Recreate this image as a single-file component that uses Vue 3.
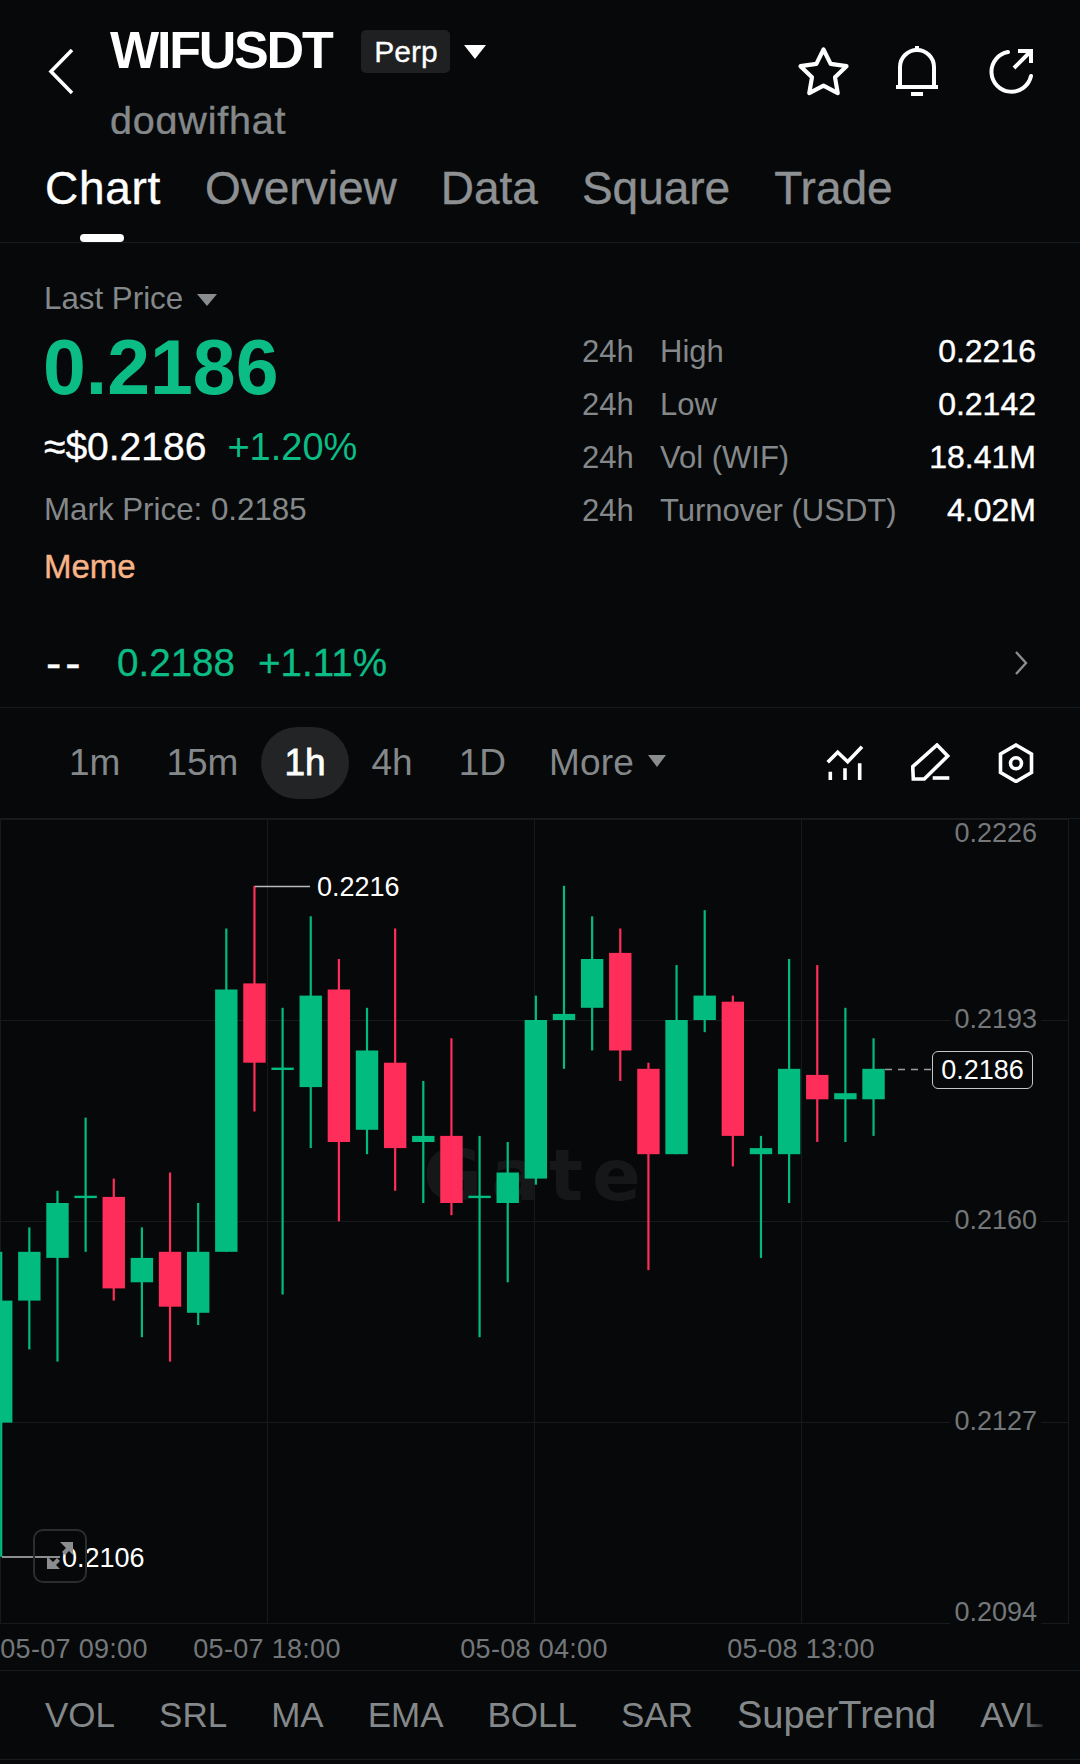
<script setup>
import { computed } from 'vue'

const tabs = ['Chart', 'Overview', 'Data', 'Square', 'Trade']
const intervals = ['1m', '15m', '1h', '4h', '1D']
const indicators = ['VOL', 'SRL', 'MA', 'EMA', 'BOLL', 'SAR', 'SuperTrend', 'AVL']

const stats = [
  { name: 'High', value: '0.2216' },
  { name: 'Low', value: '0.2142' },
  { name: 'Vol (WIF)', value: '18.41M' },
  { name: 'Turnover (USDT)', value: '4.02M' },
]

// chart scale, prices in 1/10000
const CHART_TOP = 819
const UNIT = 6.1
const priceY = (p) => 1020 + (2194 - p) * UNIT - CHART_TOP

// high, top of body, bottom of body, low, up or down
const rows = [
  [2156, 2148, 2128, 2106, 1],
  [2160, 2156, 2148, 2140, 1],
  [2166, 2164, 2155, 2138, 1],
  [2178, 2165, 2165, 2156, 1],
  [2168, 2165, 2150, 2148, 0],
  [2160, 2155, 2151, 2142, 1],
  [2169, 2156, 2147, 2138, 0],
  [2164, 2156, 2146, 2144, 1],
  [2209, 2199, 2156, 2156, 1],
  [2216, 2200, 2187, 2179, 0],
  [2196, 2186, 2186, 2149, 1],
  [2211, 2198, 2183, 2173, 1],
  [2204, 2199, 2174, 2161, 0],
  [2196, 2189, 2176, 2172, 1],
  [2209, 2187, 2173, 2166, 0],
  [2184, 2175, 2174, 2164, 1],
  [2191, 2175, 2164, 2162, 0],
  [2175, 2165, 2165, 2142, 1],
  [2174, 2169, 2164, 2151, 1],
  [2198, 2194, 2168, 2167, 1],
  [2216, 2195, 2194, 2186, 1],
  [2211, 2204, 2196, 2189, 1],
  [2209, 2205, 2189, 2184, 0],
  [2187, 2186, 2172, 2153, 0],
  [2203, 2194, 2172, 2172, 1],
  [2212, 2198, 2194, 2192, 1],
  [2198, 2197, 2175, 2170, 0],
  [2175, 2173, 2172, 2155, 1],
  [2204, 2186, 2172, 2164, 1],
  [2203, 2185, 2181, 2174, 0],
  [2196, 2182, 2181, 2174, 1],
  [2191, 2186, 2181, 2175, 1],
]

const candles = computed(() => rows.map((r, i) => {
  const top = priceY(r[1])
  const h = priceY(r[2]) - top
  return {
    x: 1.2 + i * 28.14,
    hi: priceY(r[0]),
    lo: priceY(r[3]),
    top: h === 0 ? top - 1.2 : top,
    h: h === 0 ? 2.4 : h,
    color: r[4] ? '#02bb7f' : '#ff2d5a',
  }
}))

const gridX = [0.5, 267.5, 534.5, 801.5, 1068.5]
const gridY = [0.5, 201.5, 402.5, 603.5, 804.5]

const axis = [
  { label: '0.2226', top: 1 },
  { label: '0.2193', top: 187 },
  { label: '0.2160', top: 388 },
  { label: '0.2127', top: 589 },
  { label: '0.2094', top: 780 },
]

const dates = [
  { label: '05-07 09:00', left: 74 },
  { label: '05-07 18:00', left: 267 },
  { label: '05-08 04:00', left: 534 },
  { label: '05-08 13:00', left: 801 },
]
</script>

<template>
  <div class="page">
    <div class="head">
      <svg class="back" width="30" height="50" viewBox="0 0 30 50" fill="none" stroke="#fff" stroke-width="3.6">
        <path d="M25 3 L4 24.500 L25 46" />
      </svg>
      <div class="names">
        <div class="title-row">
          <span class="title">WIFUSDT</span>
          <span class="badge">Perp</span>
          <span class="caret"></span>
        </div>
        <div class="sub">dogwifhat</div>
      </div>
      <div class="actions">
        <svg class="star" width="57" height="57" viewBox="0 0 52 52" fill="none" stroke="#fff" stroke-width="3.800" stroke-linejoin="round">
          <polygon points="26,5 32.500,18.100 47,20.200 36.500,30.400 39,44.800 26,38 13,44.800 15.500,30.400 5,20.200 19.500,18.100" />
        </svg>
        <svg width="44" height="52" viewBox="0 0 44 52" fill="none" stroke="#fff" stroke-width="4">
          <path d="M4 41 V21 A17 17 0 0 1 38 21 V41" />
          <path d="M0 41 H42 M15 48 H27" />
          <path d="M21 0 V5" />
        </svg>
        <svg width="50" height="50" viewBox="0 0 50 50" fill="none" stroke="#fff" stroke-width="4">
          <path d="M22 6 A20 20 0 1 0 45 30" stroke-linecap="round" />
          <path d="M28 22 L45 5 M32 5 H45 V17" />
        </svg>
      </div>
    </div>

    <div class="tabs">
      <span v-for="(t, i) in tabs" :key="t" class="tab" :class="{ active: i === 0 }">{{ t }}</span>
    </div>

    <div class="info">
      <div class="info-left">
        <div class="last">Last Price<span class="caret small"></span></div>
        <div class="price">0.2186</div>
        <div class="fiat"><span class="med">≈$0.2186</span><span class="up">+1.20%</span></div>
        <div class="mark">Mark Price: 0.2185</div>
        <div class="meme">Meme</div>
      </div>
      <div class="info-right">
        <div v-for="s in stats" :key="s.name" class="stat">
          <span class="stat-pre">24h</span>
          <span>{{ s.name }}</span>
          <span class="stat-val">{{ s.value }}</span>
        </div>
      </div>
    </div>

    <div class="sub-price">
      <span class="dash">--</span>
      <span class="up-a">0.2188</span>
      <span class="up-b">+1.11%</span>
      <svg class="chev" width="14" height="26" viewBox="0 0 14 26" fill="none" stroke="#8a8d8f" stroke-width="2.400">
        <path d="M2 2 L12 13 L2 24" />
      </svg>
    </div>

    <div class="bar">
      <span v-for="v in intervals" :key="v" class="iv" :class="{ on: v === '1h' }">{{ v }}</span>
      <span class="iv iv-more">More<span class="caret small more"></span></span>
      <div class="tools">
        <svg width="40" height="40" viewBox="0 0 40 40" fill="none" stroke="#fff" stroke-width="3.600">
          <path d="M1.700 19.300 L11.700 9.300 L21.700 18.700 L36 3.700" />
          <path d="M4.300 28.700 V37 M19 25.300 V37 M33.700 20.300 V37" />
        </svg>
        <svg width="40" height="40" viewBox="0 0 40 40" fill="none" stroke="#fff" stroke-width="3.600">
          <path d="M1.700 23.700 L26 2 L36.700 13 L13.300 36 H2.300 Z" />
          <path d="M21.700 35 H38.300" />
        </svg>
        <svg width="40" height="40" viewBox="0 0 40 40" fill="none" stroke="#fff" stroke-width="3.600">
          <polygon points="20,2 35.500,11 35.500,29.500 20,38.500 4.500,29.500 4.500,11" />
          <circle cx="20" cy="20.300" r="5.500" />
        </svg>
      </div>
    </div>

    <div class="chart">
      <svg class="plot" width="1080" height="805" viewBox="0 0 1080 805">
        <line v-for="x in gridX" :key="'x' + x" :x1="x" :x2="x" y1="0" y2="805" stroke="#17191b" />
        <line v-for="y in gridY" :key="'y' + y" x1="0" x2="1069" :y1="y" :y2="y" stroke="#17191b" />
        <text class="mark-water" x="423" y="381">Gate</text>
        <g v-for="(c, i) in candles" :key="i">
          <rect :x="c.x - 1.100" :y="c.hi" width="2.200" :height="c.lo - c.hi" :fill="c.color" />
          <rect :x="c.x - 11.200" :y="c.top" width="22.400" :height="c.h" :fill="c.color" />
        </g>
        <path d="M255 67.500 H310" stroke="#b8babb" stroke-width="1.400" />
        <path d="M2 738 H60" stroke="#b8babb" stroke-width="1.400" />
        <path d="M885 250.500 H932" stroke="#9a9c9e" stroke-width="1.400" stroke-dasharray="7 6" />
      </svg>

      <span v-for="a in axis" :key="a.label" class="tick" :style="{ top: a.top + 'px' }">{{ a.label }}</span>
      <span class="note note-high">0.2216</span>
      <span class="note note-low">0.2106</span>
      <span class="now">0.2186</span>

      <div class="expand">
        <svg width="50" height="50" viewBox="0 0 50 50" fill="#8b8d8f">
          <path d="M25 11 H38 V24 L34 20 L30 24 L27 21 L31 17 Z" />
          <path d="M12 25 V38 H25 L21 34 L25 30 L22 27 L18 31 Z" />
        </svg>
      </div>
    </div>

    <div class="dates">
      <span v-for="d in dates" :key="d.label" class="date" :style="{ left: d.left + 'px' }">{{ d.label }}</span>
    </div>

    <div class="inds">
      <span v-for="n in indicators" :key="n" :class="{ wide: n === 'SuperTrend' }">{{ n }}</span>
    </div>
  </div>
</template>

<style>
html, body { margin: 0; background: #060809; }
</style>

<style scoped>
.page {
  width: 1080px;
  height: 1764px;
  overflow: hidden;
  background: #060809;
  color: #fff;
  font-family: "Liberation Sans", Arial, sans-serif;
}

.head {
  display: flex;
  height: 165px;
}
.back {
  margin: 47px 0 0 47px;
  flex: none;
}
.names {
  margin-left: 33px;
  padding-top: 24px;
}
.title-row {
  display: flex;
  align-items: flex-start;
  height: 52px;
}
.title {
  font-size: 52px;
  line-height: 52px;
  font-weight: 700;
  letter-spacing: -2.200px;
}
.badge {
  margin: 6px 0 0 30px;
  height: 43px;
  width: 89px;
  text-align: center;
  font-size: 30px;
  line-height: 43px;
  background: #1e2021;
  border-radius: 5px;
  -webkit-text-stroke: 0.3px currentColor;
}
.caret {
  width: 0;
  height: 0;
  margin: 21px 0 0 14px;
  border-left: 11px solid transparent;
  border-right: 11px solid transparent;
  border-top: 14px solid #fff;
}
.caret.small {
  display: inline-block;
  margin: 0 0 3px 14px;
  border-left-width: 10px;
  border-right-width: 10px;
  border-top: 12px solid #8a8d8f;
}
.caret.more {
  margin-bottom: 8px;
  border-left-width: 9px;
  border-right-width: 9px;
}
.sub {
  margin-top: 25px;
  height: 33px;
  overflow: hidden;
  font-size: 39.500px;
  line-height: 38px;
  letter-spacing: 0.8px;
  color: #85888a;
  -webkit-text-stroke: 0.4px currentColor;
}
.actions {
  margin-left: auto;
  padding: 46px 44px 0 0;
  display: flex;
  align-items: flex-start;
  gap: 46px;
}
.star {
  margin: -2px -2px 0 0;
}

.tabs {
  display: flex;
  gap: 44px;
  height: 77px;
  padding-left: 45px;
  border-bottom: 1px solid #191c1e;
}
.tab {
  position: relative;
  font-size: 46px;
  line-height: 46px;
  color: #8e9193;
  -webkit-text-stroke: 0.4px currentColor;
}
.tab.active {
  color: #fff;
  letter-spacing: 0.7px;
}
.tab.active::after {
  content: "";
  position: absolute;
  left: 35px;
  top: 69px;
  bottom: 0;
  width: 44px;
  background: #fff;
  border-radius: 4px;
}

.info {
  display: flex;
  height: 342px;
}
.info-left {
  padding: 38px 0 0 44px;
}
.last {
  font-size: 31.300px;
  line-height: 36px;
  color: #85888a;
}
.price {
  margin: 12px 0 0 -1px;
  font-size: 77px;
  line-height: 76px;
  font-weight: 700;
  color: #0cbc85;
}
.fiat {
  margin-top: 20px;
  display: flex;
  gap: 21px;
  font-size: 39px;
  line-height: 44px;
}
.med {
  -webkit-text-stroke: 0.4px currentColor;
}
.up {
  color: #0cbc85;
  font-size: 38px;
}
.mark {
  margin-top: 23px;
  font-size: 31.300px;
  line-height: 36px;
  color: #85888a;
}
.meme {
  margin-top: 21px;
  font-size: 33px;
  line-height: 36px;
  color: #f8b488;
  -webkit-text-stroke: 0.4px currentColor;
}
.info-right {
  margin-left: auto;
  width: 454px;
  padding: 82px 44px 0 0;
}
.stat {
  display: flex;
  height: 53px;
  align-items: center;
  font-size: 31px;
  color: #85888a;
}
.stat-pre {
  width: 78px;
}
.stat-val {
  margin-left: auto;
  font-size: 32px;
  color: #fff;
  -webkit-text-stroke: 0.4px currentColor;
}

.sub-price {
  display: flex;
  align-items: center;
  height: 88px;
  padding: 34px 52px 0 46px;
  font-size: 38.600px;
  color: #0cbc85;
  border-bottom: 1px solid #191c1e;
  -webkit-text-stroke: 0.3px currentColor;
}
.dash {
  width: 71px;
  font-size: 46px;
  color: #fff;
  letter-spacing: 4px;
}
.up-b {
  margin-left: 23px;
}
.chev {
  margin-left: auto;
}

.bar {
  display: flex;
  align-items: center;
  height: 110px;
  padding: 0 44px 0 46px;
  border-bottom: 1px solid #191c1e;
}
.iv {
  padding: 0 23px;
  height: 72px;
  line-height: 72px;
  font-size: 37px;
  color: #85888a;
}
.iv.on {
  background: #222425;
  border-radius: 36px;
  color: #fff;
  -webkit-text-stroke: 0.8px currentColor;
}
.iv-more {
  margin-left: -3px;
  letter-spacing: 0.2px;
}
.tools {
  margin-left: auto;
  display: flex;
  gap: 45px;
}

.chart {
  position: relative;
  height: 805px;
}
.plot {
  display: block;
}
.mark-water {
  font-family: "DejaVu Sans", sans-serif;
  font-size: 72px;
  font-weight: 700;
  letter-spacing: 9px;
  fill: #151718;
}
.tick {
  position: absolute;
  right: 39px;
  padding: 0 4px;
  font-size: 27px;
  line-height: 27px;
  color: #74777a;
  background: #060809;
}
.note {
  position: absolute;
  font-size: 27px;
  line-height: 27px;
}
.note-high {
  left: 317px;
  top: 55px;
}
.note-low {
  left: 62px;
  top: 726px;
}
.now {
  position: absolute;
  left: 932px;
  top: 232px;
  width: 99px;
  height: 36px;
  text-align: center;
  font-size: 27px;
  line-height: 36px;
  border: 1px solid #c4c6c7;
  border-radius: 6px;
}
.expand {
  position: absolute;
  left: 33px;
  top: 710px;
  width: 50px;
  height: 50px;
  border: 2px solid #2b2d2e;
  border-radius: 10px;
}

.dates {
  position: relative;
  height: 46px;
  border-bottom: 1px solid #191c1e;
}
.date {
  position: absolute;
  top: 12px;
  transform: translateX(-50%);
  font-size: 27px;
  line-height: 27px;
  letter-spacing: 0.3px;
  color: #74777a;
  white-space: nowrap;
}

.inds {
  position: relative;
  display: flex;
  align-items: center;
  gap: 44px;
  height: 88px;
  padding-left: 45px;
  overflow: hidden;
  font-size: 35px;
  color: #85888a;
  white-space: nowrap;
  border-bottom: 1px solid #191c1e;
}
.wide {
  font-size: 38px;
}
.inds::after {
  content: "";
  position: absolute;
  top: 0;
  bottom: 0;
  left: 1022px;
  width: 58px;
  background: linear-gradient(to right, rgba(6, 8, 9, 0), #060809 50%);
}
</style>
